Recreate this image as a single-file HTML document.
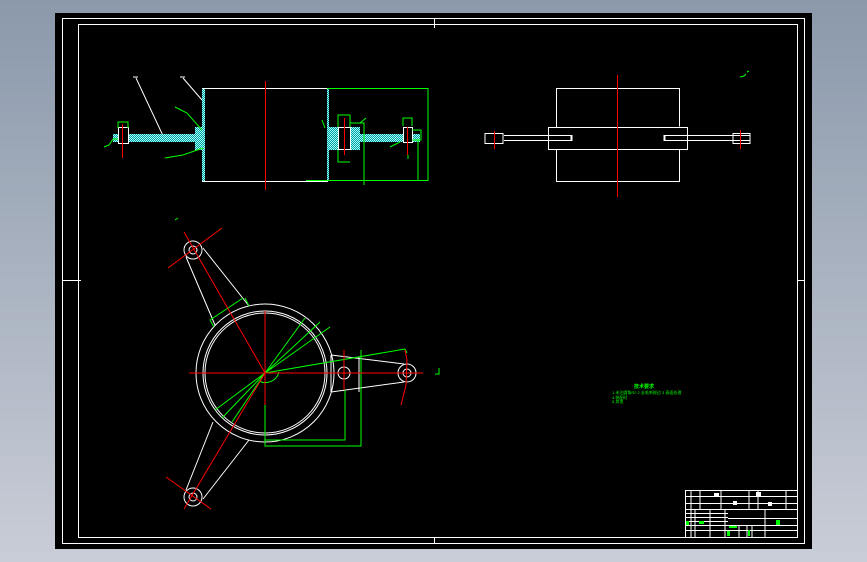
<!DOCTYPE html>
<html><head><meta charset="utf-8"><style>
html,body{margin:0;padding:0;}
body{width:867px;height:562px;overflow:hidden;background:linear-gradient(#8b99ab,#c9cdd7);}
svg{position:absolute;left:0;top:0;}
text{font-family:"Liberation Sans",sans-serif;}
</style></head><body>
<svg width="867" height="562" viewBox="0 0 867 562" xmlns="http://www.w3.org/2000/svg">
<defs>
<pattern id="h" width="2" height="2" patternUnits="userSpaceOnUse"><rect width="2" height="2" fill="#00a0a0"/><rect width="1" height="1" fill="#a0ffff"/><rect x="1" y="1" width="1" height="1" fill="#a0ffff"/></pattern>
</defs>
<rect x="55" y="13" width="757" height="536" fill="#000"/>
<g fill="none" stroke="#fff" stroke-width="1">
<rect x="62.5" y="18.5" width="742" height="525"/>
<rect x="78.5" y="24.5" width="719" height="513"/>
<line x1="62" y1="280.5" x2="81" y2="280.5"/>
<line x1="797" y1="280.5" x2="804" y2="280.5"/>
<line x1="434.5" y1="18" x2="434.5" y2="28"/>
<line x1="434.5" y1="537" x2="434.5" y2="543"/>
</g>
<!-- Top-left view -->
<g stroke="#fff" fill="none">
<rect x="202.5" y="88.5" width="125" height="93"/>
<path d="M136 78 L165 140 M183 78 L202 100"/>
<path d="M133 77h5 M180 77h5"/>
</g>
<rect x="202" y="89" width="3" height="92" fill="url(#h)"/>
<rect x="113" y="134" width="90" height="8" fill="url(#h)"/>
<rect x="195" y="127" width="8" height="23" fill="url(#h)"/>
<rect x="327" y="127" width="11" height="23" fill="url(#h)"/>
<rect x="350" y="127" width="10" height="23" fill="url(#h)"/>
<rect x="360" y="134" width="60" height="8" fill="url(#h)"/>
<rect x="327" y="89" width="2" height="92" fill="url(#h)"/>
<g stroke="#fff" fill="none">
<rect x="118.5" y="127.5" width="10" height="16" fill="#000"/>
<rect x="338.5" y="127.5" width="12" height="22" fill="#000"/>
<rect x="403.5" y="127.5" width="9" height="15" fill="#000"/>
</g>
<g stroke="#0f0" fill="none">
<path d="M327 88.5h101v92H306 M428 88v93"/>
<path d="M118 128v-6h10v6 M338 127v-12h12v12 M350 123h14v62 M338 150v12h12 M403 126v-8h9v8 M412 130h9v10h-9 M418 140v41"/>
<path d="M104 147l5-2 4-6h5 M175 107l12 6 15 17 M165 158l18-3 20-7 M322 120l3 8 M360 123l6-5 M390 147l10-5 M408 155v4"/>
</g>
<g stroke="#f00">
<line x1="265.5" y1="81" x2="265.5" y2="190"/>
<line x1="122.5" y1="124" x2="122.5" y2="158"/>
<line x1="344.5" y1="118" x2="344.5" y2="155"/>
<line x1="407.5" y1="127" x2="407.5" y2="155"/>
</g>
<!-- Top-right view -->
<g stroke="#fff" fill="none">
<path d="M556.5 89V88.5h123v38 M556.5 89v38 M548.5 127.5h139v22h-139z M556.5 150v31.5h123V150"/>
<path d="M504 135.5h67v5h-67 M686 135.5h-21v5h21 M665 135.5h85 M665 140.5h85 M572 135v6 M664 135v6"/>
<path d="M485 133.5h18v10h-18z M733 133.5h17v10h-17z"/>
</g>
<g stroke="#f00">
<line x1="617.5" y1="75" x2="617.5" y2="197"/>
<line x1="494.5" y1="131" x2="494.5" y2="149"/>
<line x1="740.5" y1="130" x2="740.5" y2="149"/>
</g>
<path d="M740 77l4-1 2-2 M747 72l2-1" stroke="#0f0" fill="none"/>
<!-- Front view -->
<g stroke="#fff" fill="none">
<circle cx="265" cy="373" r="69"/>
<circle cx="265" cy="373" r="62"/>
<circle cx="265" cy="373" r="60"/>
<circle cx="193" cy="250" r="9"/><circle cx="193" cy="250" r="4"/>
<circle cx="193" cy="497" r="9"/><circle cx="193" cy="497" r="4"/>
<circle cx="407" cy="373" r="9"/><circle cx="407" cy="373" r="4"/>
<circle cx="344" cy="373" r="6"/>
<path d="M186 257 L215 325 M203 248 L249 306"/>
<path d="M186 490 L213 422 M203 499 L249 440"/>
<path d="M331 355 L404 364 M331 392 L404 382 M331 355v37 M359 357v35"/>
</g>
<g stroke="#0f0" fill="none">
<path d="M210 320 L243 298 M249 306l-4-8 M210 320l4 7"/>
<path d="M265 373 L305 318 M265 373 L320 322 M265 373 L330 327"/>
<path d="M265 373 L215 410 M265 373 L222 418 M265 373 L232 422"/>
<path d="M265 373 L405 349 M405 349l2 4"/>
<path d="M279 372a14 14 0 0 1-20 9"/>
<path d="M265 405v41h96v-96 M265 440h80v-50"/>
<path d="M175 220l3-2 M439 368v6h-4"/>
</g>
<g stroke="#f00" fill="none">
<line x1="189" y1="373" x2="423" y2="373"/>
<line x1="265" y1="311" x2="265" y2="405"/>
<path d="M184 232 L265 373 L184 509"/>
<path d="M168 268l54-40 M166 477l45 32 M344 350v40 M405 350l2 10 -1 25 -5 20"/>
</g>
<!-- Notes -->
<g fill="#0f0" font-size="4">
<text x="634" y="388" font-size="5" font-weight="bold">技术要求</text>
<text x="612" y="394">1.未注圆角R2 2.去毛刺锐边 3.表面处理</text>
<text x="612" y="399">4.装配时</text>
<text x="612" y="403">5.其他</text>
</g>
<!-- Title block -->
<g stroke="#fff" fill="none">
<rect x="685.5" y="490.5" width="112" height="47"/>
<path d="M685 496.5h112 M685 503.5h112 M685 509.5h43 M685 513.5h43 M685 517.5h43 M685 521.5h43 M685 525.5h112 M685 530.5h112 M728 509.5h69 M728 518.5h69 M725 509v29 M765 509v29 M691 490v47 M700 490v19 M721 490v19 M749 490v19 M758 490v19 M786 490v19 M695 509v28 M710 509v28 M739 525v12 M747 525v12 M752 525v12"/>
</g>
<g fill="#fff"><rect x="714" y="493" width="5" height="3"/><rect x="756" y="492" width="5" height="5"/><rect x="733" y="501" width="4" height="4"/><rect x="768" y="502" width="4" height="4"/></g>
<g fill="#0f0"><rect x="776" y="520" width="4" height="5"/><rect x="699" y="521" width="5" height="3"/><rect x="729" y="526" width="8" height="2"/><rect x="748" y="530" width="2" height="6"/><rect x="727" y="531" width="3" height="5"/><rect x="686" y="521" width="3" height="4"/></g>
</svg>
</body></html>
